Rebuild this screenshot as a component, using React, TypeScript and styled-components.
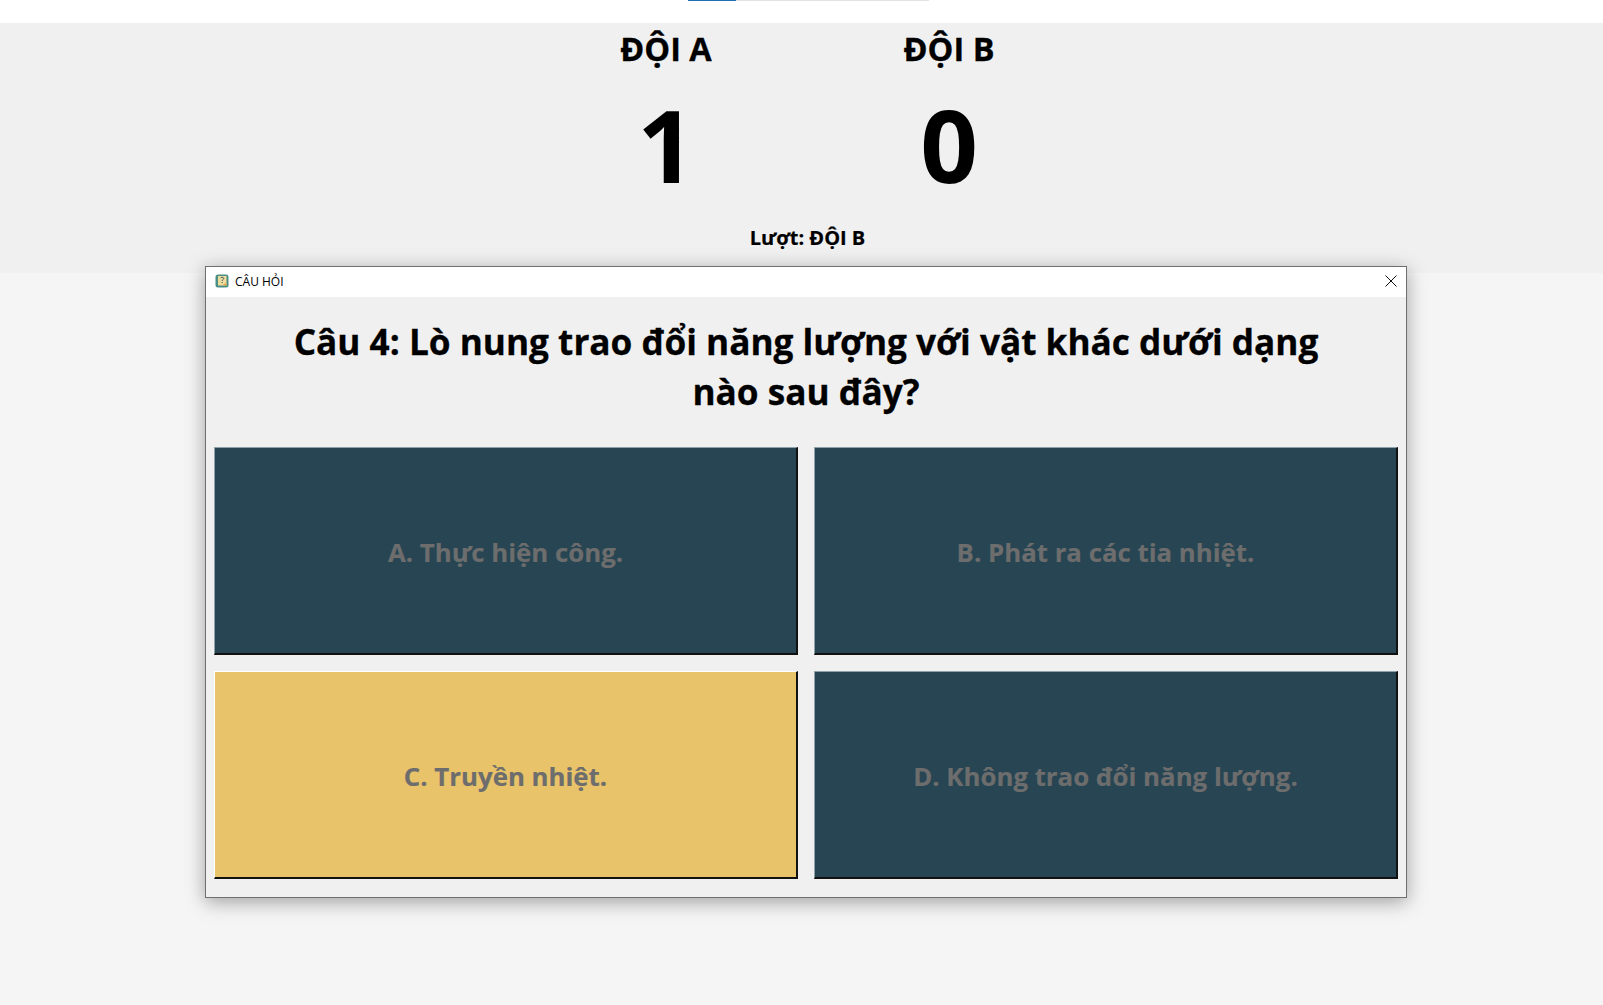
import React from "react";
import styled, { createGlobalStyle } from "styled-components";

const Global = createGlobalStyle`
  html, body { margin: 0; padding: 0; background: #f5f5f5; }
  body { font-family: "Open Sans", "Noto Sans", sans-serif; overflow: hidden; }
`;

const Page = styled.div`
  position: relative;
  width: 1603px;
  height: 1005px;
  background: #f5f5f5;
  overflow: hidden;
`;

const TopBar = styled.div`
  height: 23px;
  background: #fff;
  display: flex;
  justify-content: center;
`;

const Progress = styled.div`
  width: 241px;
  height: 1px;
  margin-left: 13px;
  background: #e3e3e3;
  display: flex;
`;

const ProgressFill = styled.div`
  width: 48px;
  background: #1f6fb5;
`;

const Scoreboard = styled.div`
  height: 250px;
  box-sizing: border-box;
  padding-left: 12px;
  background: #f0f0f0;
  display: flex;
  flex-direction: column;
  align-items: center;
`;

const Teams = styled.div`
  display: grid;
  grid-template-columns: 283px 283px;
  justify-content: center;
  padding-top: 5px;
`;

const Team = styled.div`
  display: flex;
  flex-direction: column;
  align-items: center;
  color: #000;
`;

const TeamName = styled.div`
  font-size: 32.5px;
  line-height: 42px;
  font-weight: 700;
  -webkit-text-stroke: 0.3px #000;
`;

const Score = styled.div`
  font-size: 101px;
  line-height: 130px;
  font-weight: 700;
  margin-top: 9px;
`;

const Turn = styled.div`
  font-size: 20px;
  line-height: 28px;
  font-weight: 700;
  color: #000;
  margin-top: 15px;
  -webkit-text-stroke: 0.2px #000;
`;

const Dialog = styled.div`
  position: absolute;
  left: 205px;
  top: 266px;
  width: 1202px;
  height: 632px;
  box-sizing: border-box;
  border: 1px solid #6f6f6f;
  background: #f0f0f0;
  box-shadow: 0 4px 18px rgba(0, 0, 0, 0.35);
  display: flex;
  flex-direction: column;
`;

const TitleBar = styled.div`
  height: 30px;
  flex: none;
  box-sizing: border-box;
  padding: 0 9px 2px;
  background: #fff;
  display: flex;
  align-items: center;
  gap: 6px;
`;

const TitleText = styled.span`
  font-family: "Open Sans", sans-serif;
  font-size: 12px;
  color: #000;
  flex: 1;
`;

const Close = styled.div`
  width: 12px;
  height: 12px;
  display: flex;
`;

const Question = styled.div`
  font-size: 35.2px;
  line-height: 50px;
  font-weight: 700;
  color: #000;
  text-align: center;
  -webkit-text-stroke: 0.3px #000;
  padding: 19px 60px 0;
  height: 130px;
  flex: none;
  box-sizing: border-box;
  margin-bottom: 20px;
`;

const Answers = styled.div`
  display: grid;
  grid-template-columns: 584px 584px;
  grid-template-rows: 208px 208px;
  gap: 16px;
  justify-content: center;
`;

const Answer = styled.div<{ $selected?: boolean }>`
  box-sizing: border-box;
  padding-top: 2px;
  background: ${(p) => (p.$selected ? "#e9c36a" : "#274553")};
  border-right: 2px solid #111;
  border-bottom: 2px solid #111;
  border-top: 1px solid ${(p) => (p.$selected ? "#fff" : "#8fa2ac")};
  border-left: 1px solid ${(p) => (p.$selected ? "#fff" : "#8fa2ac")};
  display: flex;
  align-items: center;
  justify-content: center;
  color: #6d6d6d;
  font-size: 25.8px;
  font-weight: 700;
  -webkit-text-stroke: 0.2px #6d6d6d;
`;

const AppIcon = () => (
  <svg width="14" height="14" viewBox="0 0 14 14">
    <rect x="0.5" y="0.5" width="13" height="13" rx="2.5" fill="#4a8f86" />
    <rect x="3" y="2" width="8.5" height="9.5" fill="#f0dc9a" />
    <path d="M5.5 4.2c.5-1.3 3.2-1.2 3.2.3 0 1.2-1.6 1.1-1.6 2.4M7.1 8v1" stroke="#35506a" strokeWidth="1" fill="none" />
    <path d="M8 11l3.5-2.5V11.5H8z" fill="#e0a94a" />
  </svg>
);

export default function App() {
  return (
    <Page>
      <Global />
      <TopBar>
        <Progress>
          <ProgressFill />
        </Progress>
      </TopBar>
      <Scoreboard>
        <Teams>
          <Team>
            <TeamName>ĐỘI A</TeamName>
            <Score>1</Score>
          </Team>
          <Team>
            <TeamName>ĐỘI B</TeamName>
            <Score>0</Score>
          </Team>
        </Teams>
        <Turn>Lượt: ĐỘI B</Turn>
      </Scoreboard>
      <Dialog>
        <TitleBar>
          <AppIcon />
          <TitleText>CÂU HỎI</TitleText>
          <Close>
            <svg width="12" height="12" viewBox="0 0 12 12">
              <path d="M0.5 0.5L11.5 11.5M11.5 0.5L0.5 11.5" stroke="#111" strokeWidth="1" />
            </svg>
          </Close>
        </TitleBar>
        <Question>
          Câu 4: Lò nung trao đổi năng lượng với vật khác dưới dạng
          <br />
          nào sau đây?
        </Question>
        <Answers>
          <Answer>A. Thực hiện công.</Answer>
          <Answer>B. Phát ra các tia nhiệt.</Answer>
          <Answer $selected>C. Truyền nhiệt.</Answer>
          <Answer>D. Không trao đổi năng lượng.</Answer>
        </Answers>
      </Dialog>
    </Page>
  );
}
